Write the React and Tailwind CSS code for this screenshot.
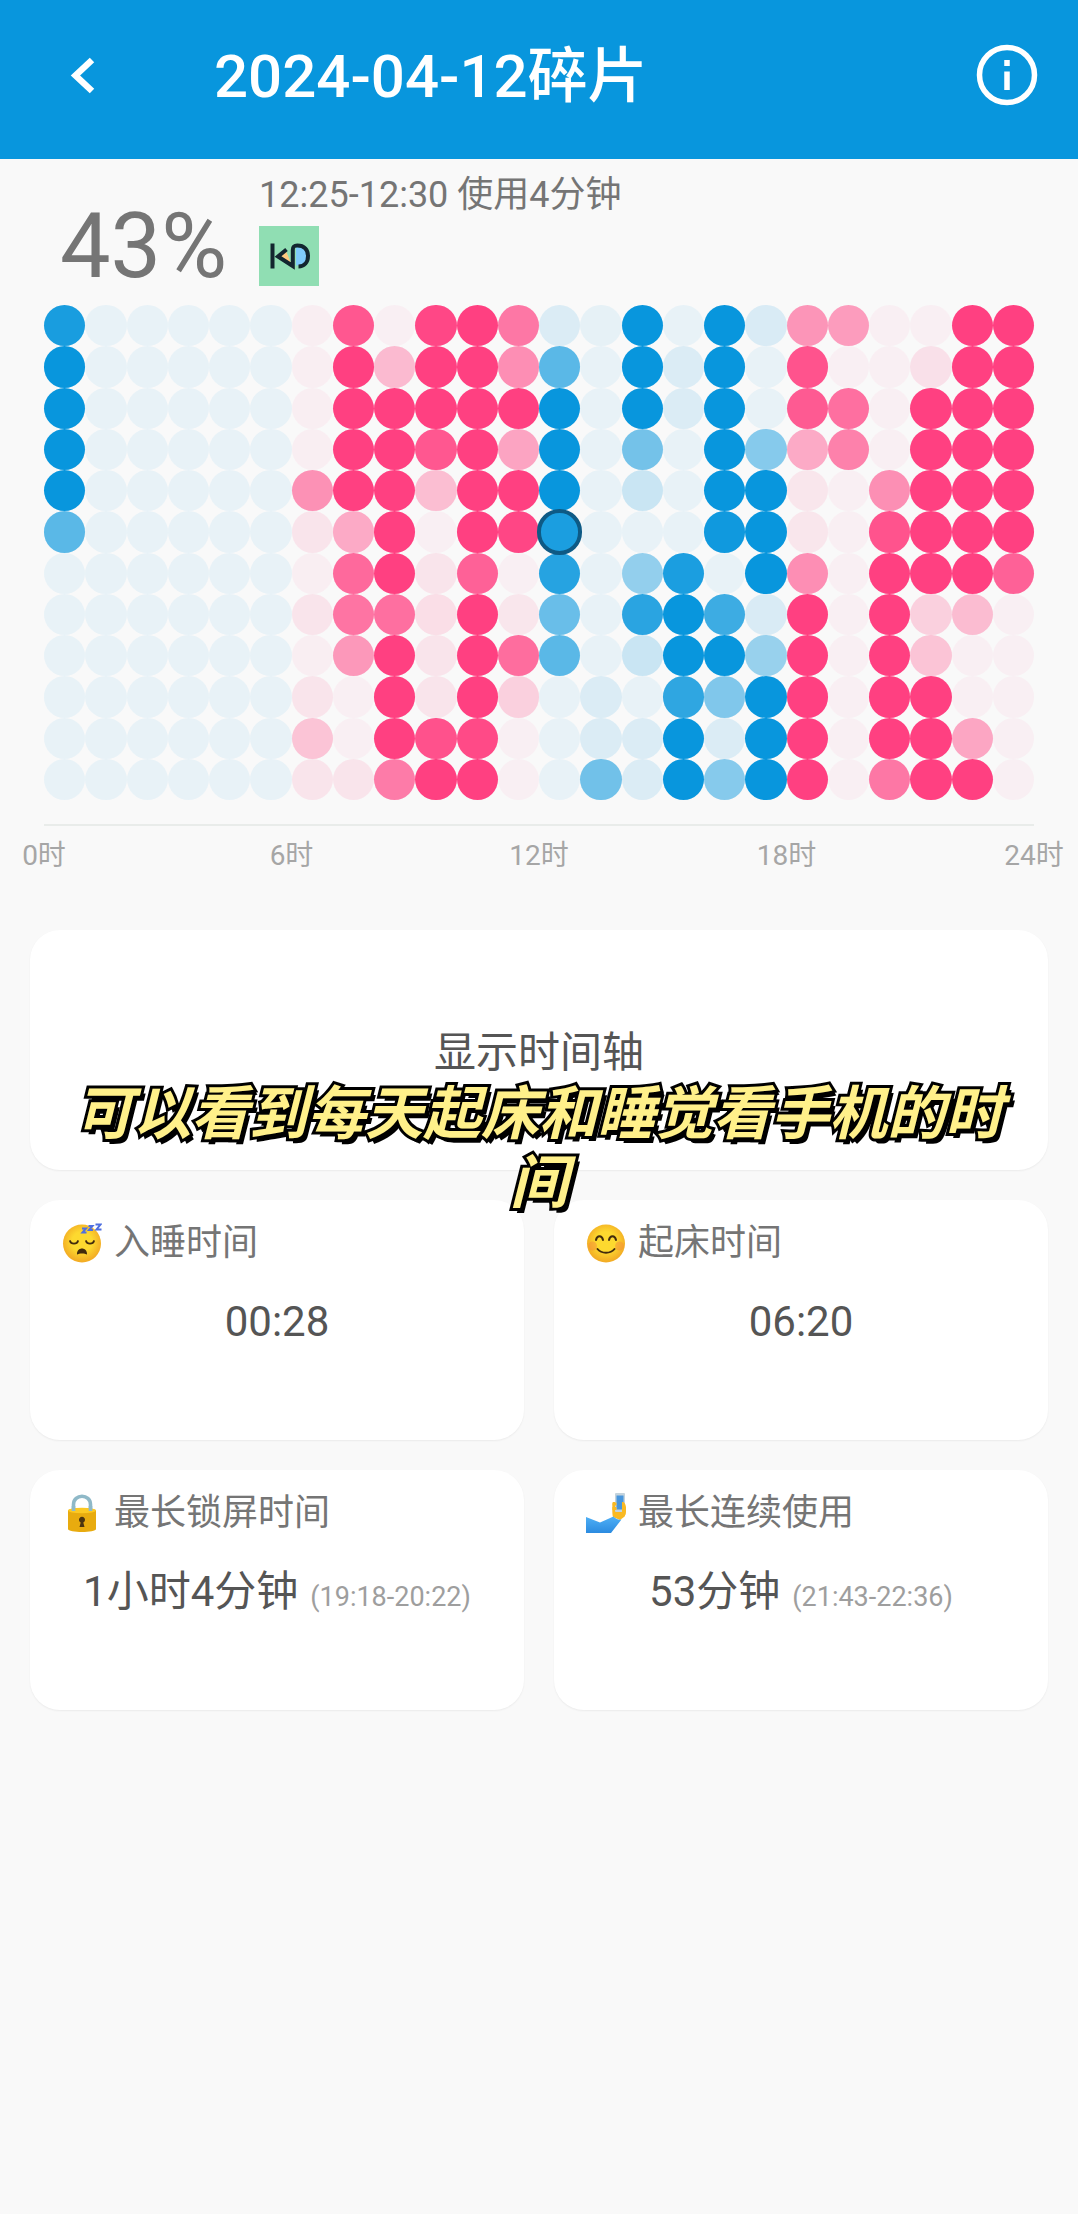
import { useState } from "react";

// Share of every five-minute slot spent on the phone, one row per hour.
const HOURS = [
  [93, 100, 100, 100, 100, 66, 7, 7, 7, 7, 7, 7],
  [7, 7, 7, 7, 7, 7, 7, 7, 7, 7, 7, 7],
  [7, 7, 7, 7, 7, 7, 7, 7, 7, 7, 7, 7],
  [7, 7, 7, 7, 7, 7, 7, 7, 7, 7, 7, 7],
  [7, 7, 7, 7, 7, 7, 7, 7, 7, 7, 7, 7],
  [7, 7, 7, 7, 7, 7, 7, 7, 7, 7, 7, 7],
  [6, 6, 6, 6, 56, 11, 6, 11, 6, 11, 29, 11],
  [88, 100, 100, 100, 100, 43, 78, 72, 52, 5, 5, 11],
  [5, 34, 100, 100, 100, 100, 100, 75, 100, 100, 100, 68],
  [96, 100, 100, 88, 32, 5, 11, 15, 11, 11, 91, 100],
  [100, 100, 100, 100, 100, 100, 82, 100, 100, 100, 95, 100],
  [70, 58, 100, 46, 100, 97, 5, 10, 76, 22, 5, 5],
  [12, 66, 100, 100, 100, 92, 88, 60, 66, 7, 7, 7],
  [8, 7, 7, 7, 7, 7, 7, 7, 7, 12, 12, 56],
  [100, 100, 100, 55, 20, 7, 42, 86, 20, 7, 12, 12],
  [7, 12, 12, 7, 7, 7, 92, 100, 100, 84, 100, 100],
  [100, 100, 100, 100, 100, 97, 7, 78, 100, 50, 12, 48],
  [13, 7, 7, 48, 100, 100, 100, 13, 40, 100, 100, 100],
  [54, 90, 86, 43, 10, 10, 58, 100, 100, 100, 100, 100],
  [50, 5, 75, 65, 5, 5, 5, 5, 5, 5, 5, 5],
  [5, 5, 5, 5, 57, 90, 100, 100, 100, 100, 100, 70],
  [5, 13, 100, 100, 100, 100, 100, 22, 29, 100, 100, 100],
  [100, 100, 100, 100, 100, 100, 100, 33, 5, 5, 45, 100],
  [100, 100, 100, 100, 100, 100, 82, 5, 5, 5, 5, 5],
];

const TICKS = ["0时", "6时", "12时", "18时", "24时"];

const two = (n) => String(n).padStart(2, "0");

function Header() {
  return (
    <header className="flex items-center bg-[#0896dd] px-10 pt-[42px] pb-[51px] text-white">
      <button type="button" aria-label="返回" className="flex size-[62px] items-center justify-center">
        <svg viewBox="0 0 62 62" className="size-full" fill="none" stroke="currentColor" strokeWidth="6.500">
          <path d="M52 16 35.500 31.500 52 47" />
        </svg>
      </button>
      <h1 className="ml-28 flex-1 pt-1 text-[60px] leading-[62px] font-medium">2024-04-12碎片</h1>
      <button type="button" aria-label="说明" className="size-[62px]">
        <svg viewBox="0 0 62 62" className="size-full" fill="none" stroke="currentColor">
          <circle cx="31" cy="31" r="27.500" strokeWidth="5.500" />
          <path d="M31 27.500V46M31 16v6" strokeWidth="5.500" />
        </svg>
      </button>
    </header>
  );
}

function AppIcon() {
  return (
    <svg viewBox="0 0 60 60" className="size-[60px]" role="img" aria-label="KD">
      <rect width="60" height="60" fill="#90deb3" />
      <path d="M20 30.500 27 25l5 12Z" fill="#ffc97f" />
      <path d="M37 21c7 0 12 3 12 9s-5 9.500-12 9.500Z" fill="#7fcbfb" />
      <path d="M13.500 17.500V42.500" stroke="#13262f" strokeWidth="4" fill="none" />
      <path
        d="M27.500 23.500 19 30.500 33.800 40V24c0-4 2-4.500 4.500-4.500 7 0 10.700 4 10.700 10.500s-4 10.500-9.500 10.500"
        stroke="#13262f"
        strokeWidth="4"
        fill="none"
      />
    </svg>
  );
}

function SleepingFace() {
  return (
    <svg viewBox="0 0 40 40" className="size-10 shrink-0" aria-hidden="true">
      <defs>
        <radialGradient id="sleepSkin" cx="50%" cy="45%" r="52%">
          <stop offset="0.500" stopColor="#fdd92f" />
          <stop offset="1" stopColor="#f3ad25" />
        </radialGradient>
      </defs>
      <circle cx="20" cy="20.500" r="19" fill="url(#sleepSkin)" />
      <path d="M8 18c1 3.500 7 3.500 8 0M24 18c1 3.500 7 3.500 8 0" stroke="#422b0d" strokeWidth="1.800" fill="none" strokeLinecap="round" />
      <path d="M15 31.500c-.5-8 10.500-8 10 0-2-1.500-8-1.500-10 0Z" fill="#422b0d" />
      <path d="M20 5.500h4l-3.500 4h4M26.500 3h4L27 7h4M33.500 1.500h5l-4 5h5" stroke="#4f6fe0" strokeWidth="2" fill="none" />
    </svg>
  );
}

function SmilingFace() {
  return (
    <svg viewBox="0 0 40 40" className="size-10 shrink-0" aria-hidden="true">
      <defs>
        <radialGradient id="smileSkin" cx="50%" cy="45%" r="52%">
          <stop offset="0.500" stopColor="#fdd92f" />
          <stop offset="1" stopColor="#f3ad25" />
        </radialGradient>
      </defs>
      <circle cx="20" cy="20.500" r="19" fill="url(#smileSkin)" />
      <circle cx="6.500" cy="23" r="4.500" fill="#f58a3c" opacity="0.450" />
      <circle cx="33.500" cy="23" r="4.500" fill="#f58a3c" opacity="0.450" />
      <path d="M10 17c1-5 6-5 7 0M23 17c1-5 6-5 7 0" stroke="#422b0d" strokeWidth="2" fill="none" strokeLinecap="round" />
      <path d="M11.500 26c4 5 13 5 17 0" stroke="#422b0d" strokeWidth="2" fill="none" strokeLinecap="round" />
    </svg>
  );
}

function Lock() {
  return (
    <svg viewBox="0 0 40 40" className="size-10 shrink-0" aria-hidden="true">
      <path d="M11.500 18v-6.500c0-11 17-11 17 0V18" stroke="#8fb9c8" strokeWidth="3.600" fill="none" />
      <path d="M6 17.500c0-3 28-3 28 0V36c0 4-28 4-28 0Z" fill="#e8ab0f" />
      <ellipse cx="20" cy="17.500" rx="14" ry="2.800" fill="#fcc923" />
      <path d="M11.500 13v5M28.500 13v5" stroke="#8fb9c8" strokeWidth="3.600" />
      <path d="M17.500 34 18.700 29.500a3 3 0 1 1 2.600 0L22.500 34Z" fill="#4b3410" />
    </svg>
  );
}

function Selfie() {
  return (
    <svg viewBox="0 0 40 40" className="size-10 shrink-0" aria-hidden="true">
      <defs>
        <linearGradient id="sleeve" x1="0" y1="0" x2="0" y2="1">
          <stop offset="0" stopColor="#4fb0f6" />
          <stop offset="1" stopColor="#2b8be0" />
        </linearGradient>
      </defs>
      <path d="M27 24c-1-3-1-13 0-15h11c2 5 3 12 0 15l-4 3Z" fill="#f9b922" />
      <rect x="29" y="0" width="10" height="19" rx="1" fill="#c4d3dc" />
      <rect x="30.500" y="2.500" width="7" height="14" fill="#4796dd" />
      <path d="M26.500 9.500h4v3h-4zM26.500 14h4v3h-4zM36 9c5-1 5 11 2 15h-9l1-5h6Z" fill="#f9b922" />
      <path d="M0 24 14 29.500 27.500 23.500c2 2.500 5 3.500 8 3L25 40H0Z" fill="url(#sleeve)" />
    </svg>
  );
}

function StatCard({ icon, label, value, range }) {
  return (
    <section className="h-60 rounded-[30px] bg-white px-8 pt-[21px] shadow-[0_1px_2px_rgba(0,0,0,0.06)]">
      <h2 className="flex items-center gap-3 text-[36px] leading-[44px] text-[#757575]">
        {icon}
        {label}
      </h2>
      <p className="mt-[29px] text-center text-[42px] leading-[56px] text-[#555]">
        {value}
        {range && <span className="ml-3 text-[27px] text-[#9e9e9e]">({range})</span>}
      </p>
    </section>
  );
}

export default function App() {
  const [selected, setSelected] = useState("12-5");

  return (
    <div className="min-h-screen bg-[#f9f9f9] pb-10 font-['Roboto','Noto_Sans_CJK_SC',sans-serif]">
      <Header />

      <main>
        <div className="flex h-[146px] gap-8 pl-[60px] text-[#757575]">
          <p className="mt-10 text-[90px] leading-[96px]">43%</p>
          <div className="mt-3">
            <p className="mb-[7px] text-[36px] leading-[48px]">12:25-12:30 使用4分钟</p>
            <AppIcon />
          </div>
        </div>

        <div className="mx-11">
          <div className="grid grid-flow-col grid-cols-24 grid-rows-12">
            {HOURS.map((slots, hour) =>
              slots.map((level, i) => {
                const id = `${hour}-${i}`;
                const tone = Math.floor(hour / 6) % 2 === 0 ? "bg-[#0896dd]" : "bg-[#ff4081]";
                const active = id === selected;
                return (
                  <button
                    key={id}
                    type="button"
                    aria-label={`${two(hour)}:${two(i * 5)}`}
                    aria-pressed={active}
                    onClick={() => setSelected(id)}
                    className={
                      active
                        ? "relative z-10 aspect-square rounded-full after:absolute after:-inset-0.5 after:rounded-full after:border-4 after:border-[#0e5a85]"
                        : "aspect-square rounded-full"
                    }
                  >
                    <span
                      className={`block size-full rounded-full ${tone}`}
                      style={{ opacity: level / 100 }}
                    />
                  </button>
                );
              })
            )}
          </div>
          <div className="mt-6 flex justify-between border-t-2 border-[#e9ecea] pt-[10px] text-[28px] leading-[40px] text-[#a6a6a6]">
            {TICKS.map((tick) => (
              <span key={tick} className="flex w-0 justify-center whitespace-nowrap">
                {tick}
              </span>
            ))}
          </div>
        </div>

        <div className="relative mx-[30px] mt-[54px] grid grid-cols-2 gap-[30px]">
          <button
            type="button"
            className="col-span-2 h-60 rounded-[30px] bg-white pt-1 text-[42px] text-[#555] shadow-[0_1px_2px_rgba(0,0,0,0.06)]"
          >
            显示时间轴
          </button>
          <StatCard icon={<SleepingFace />} label="入睡时间" value="00:28" />
          <StatCard icon={<SmilingFace />} label="起床时间" value="06:20" />
          <StatCard icon={<Lock />} label="最长锁屏时间" value="1小时4分钟" range="19:18-20:22" />
          <StatCard icon={<Selfie />} label="最长连续使用" value="53分钟" range="21:43-22:36" />

          <p className="pointer-events-none absolute inset-x-8 top-[150px] text-center text-[58px] leading-[69px] font-bold text-[#fff08a] italic [-webkit-text-stroke:6px_black] [paint-order:stroke_fill] [text-shadow:2px_2px_0_black,4px_5px_0_black]">
            可以看到每天起床和睡觉看手机的时间
          </p>
        </div>
      </main>
    </div>
  );
}
